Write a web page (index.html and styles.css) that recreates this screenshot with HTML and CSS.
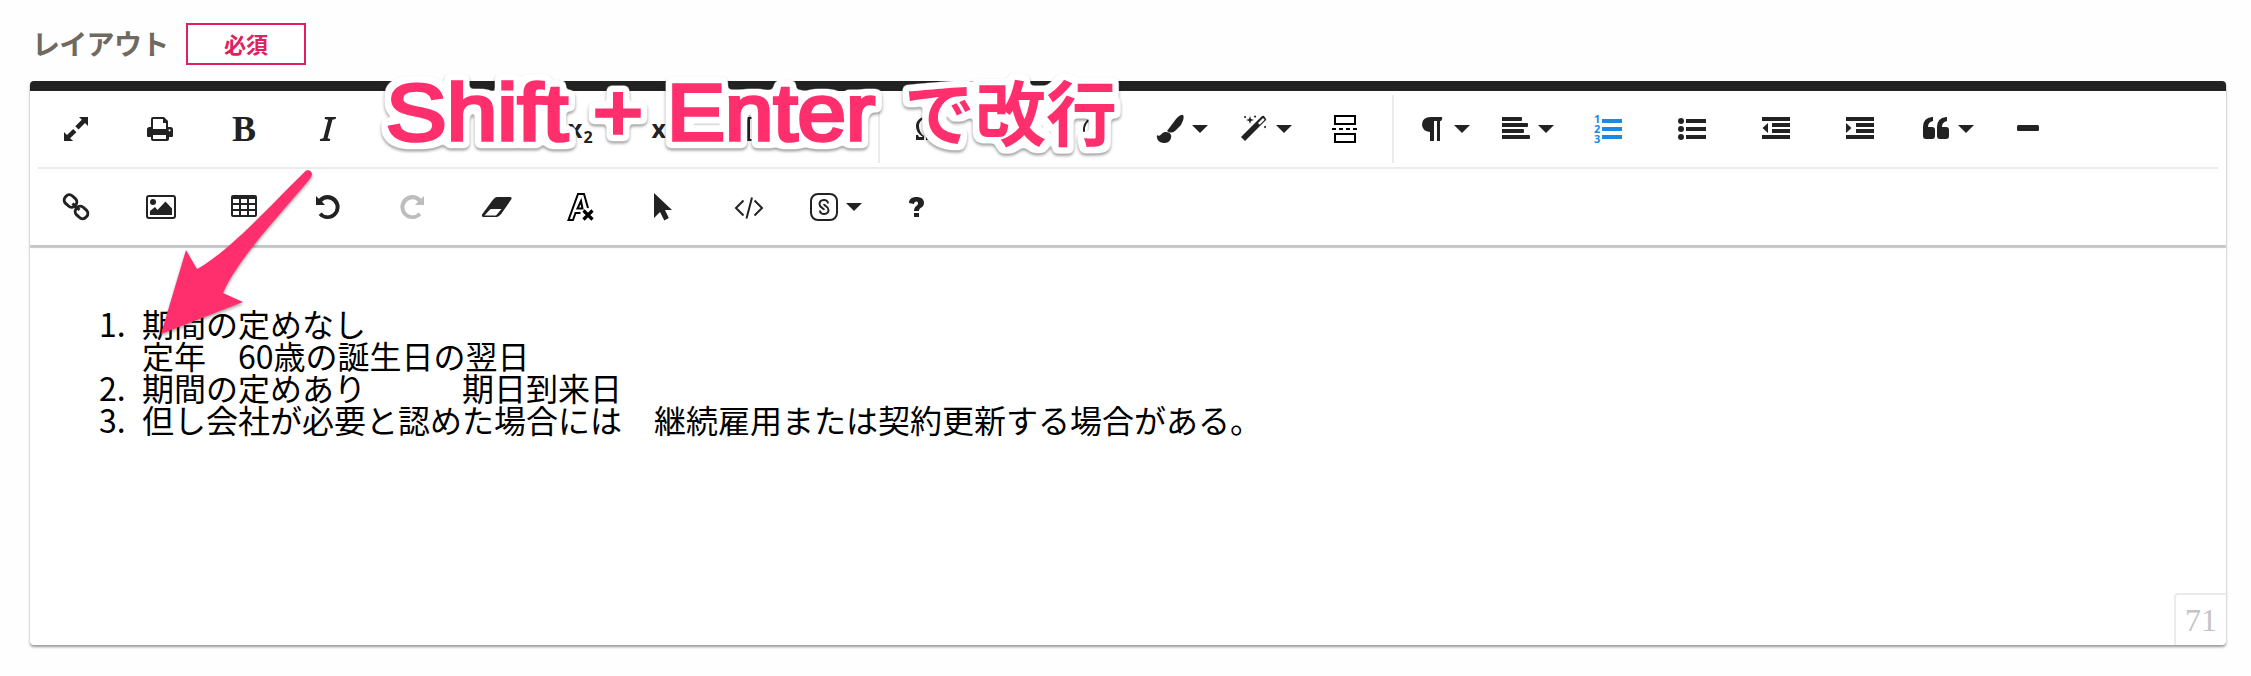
FILE: index.html
```
<!DOCTYPE html>
<html lang="ja">
<head>
<meta charset="utf-8">
<title>レイアウト</title>
<link rel="stylesheet" href="styles.css">
</head>
<body>
<main class="page">
  <div class="field-head"><label class="label">レイアウト</label><span class="required">必須</span></div>
  <section class="editor">
    <div class="toolbar">
      <div class="row">
        <svg class="btn" viewBox="34 91 84 76"><path d="M79 117h9v9l-3-3-6.500 6.500-3.200-3.200 6.500-6.500zM64 141v-9l3 3 6.200-6 3.200 3.200-6.300 6 3 2.800z"/></svg>
        <svg class="btn" viewBox="118 91 84 76"><path fill-rule="evenodd" d="M151 127v-8q0-2 2-2h11l4 4v6h2.500q2.500 0 2.500 2.500v6.500q0 1-1 1h-3v2q0 2-2 2h-14q-2 0-2-2v-2h-3q-1 0-1-1v-6.500q0-2.500 2.500-2.500zM153 119v10h13v-6h-3v-4zM153 135v4h13v-4zM169.500 129.300a1 1 0 1 0 .1 0z"/></svg>
        <svg class="btn" viewBox="202 91 84 76"><text class="serif-icon" x="232" y="141" textLength="24" lengthAdjust="spacingAndGlyphs">B</text></svg>
        <svg class="btn" viewBox="286 91 84 76"><path d="M325 117h11l-.4 2-3.200.8-4.800 18.400 2.600.8-.4 2h-10l.4-2 3.200-.8 4.800-18.400-3.500-.8z"/></svg>
        <svg class="btn" viewBox="370 91 84 76"><path d="M401 121h8v2l-2 1v9q0 5 5 5t5-5v-9l-2-1v-2h7v2l-2 1v9q0 8-8 8t-9-8v-9l-2-1z"/></svg>
        <svg class="btn" viewBox="454 91 84 76"><path d="M485 129h23v2h-23z"/></svg>
        <svg class="btn" viewBox="538 91 84 76"><text class="sans-icon" x="568" y="138" font-size="25">x</text><text class="sans-icon" x="583.500" y="143" font-size="16">2</text></svg>
        <svg class="btn" viewBox="622 91 84 76"><text class="sans-icon" x="651.500" y="138" font-size="25">x</text></svg>
        <svg class="btn" viewBox="706 91 84 76"><path d="M738 117h20v5h-2l-1-3h-5v20h3v2h-10v-2h3v-20h-5l-1 3h-2z"/></svg>
        <svg class="btn" viewBox="790 91 84 76"></svg>
        <span class="divider"></span>
        <svg class="btn" viewBox="884 91 84 76"><path d="M916 140v-5h2l1 2h4c-5-3-7-7-7-11 0-5 4-9 9-9s10 4 10 9c0 4-2 8-7 11h4l1-2h2v5h-9v-4c3-2 5-6 5-10s-3-7-6-7-6 3-6 7 2 8 5 10v4z"/></svg>
        <svg class="btn" viewBox="968 91 84 76"></svg>
        <svg class="btn" viewBox="1052 91 84 76"><path class="line" d="M1091 118q-8 5-7 14 2 8 9 8t9-8q0-9-9-14z"/></svg>
        <svg class="btn" viewBox="1136 91 84 76"><path d="M1167 131l9-12q5-5 7-4 2 2-2 10l-6 6q-4 3-8 0zM1157 135c3 3 5-4 9-3 4 0 6 3 5 6-1 4-4 5-7 5-4 0-8-3-7-8z"/><path d="M1192 125h16l-8 8z"/></svg>
        <svg class="btn" viewBox="1220 91 84 76"><path fill-rule="evenodd" d="M1241 137l20-20q2-2 3-1l2 3q1 1-1 2l-20 20zM1263 118l-5 5 1.700 1.700 5-5z"/><path d="M1250 116l1 3 3 1-3 1-1 3-1-3-3-1 3-1zM1245 116a1 1 0 1 0 .1 0zM1255 115.500a1 1 0 1 0 .1 0zM1265 126a1 1 0 1 0 .1 0z"/><path d="M1276 125h16l-8 8z"/></svg>
        <svg class="btn" viewBox="1304 91 84 76"><path class="line black" d="M1335 116h20v8h-20zM1335 134h20v8h-20z"/><path class="line black" stroke-dasharray="4 3" d="M1332 129h26"/></svg>
        <span class="divider"></span>
        <svg class="btn" viewBox="1398 91 84 76"><path d="M1431 117h11q1 2-1 4h-1v20h-3v-20h-3v20h-4v-9q-8-1-8-7.500 0-7.500 9-7.500z"/><path d="M1454 125h16l-8 8z"/></svg>
        <svg class="btn" viewBox="1482 91 84 76"><path d="M1502 117h19q1 0 1 1v2q0 1-1 1h-19zM1502 123h25q1 0 1 1v2q0 1-1 1h-25zM1502 129h21q1 0 1 1v2q0 1-1 1h-21zM1502 135h27q1 0 1 1v2q0 1-1 1h-27z"/><path d="M1538 125h16l-8 8z"/></svg>
        <svg class="btn active" viewBox="1566 91 84 76"><path d="M1602 119h20v4h-20zM1602 127h20v4h-20zM1602 135h20v4h-20z"/><g class="tiny"><text x="1594" y="123">1</text><text x="1594" y="133">2</text><text x="1594" y="143">3</text></g></svg>
        <svg class="btn" viewBox="1650 91 84 76"><path d="M1686 119h20v4h-20zM1686 127h20v4h-20zM1686 135h20v4h-20z"/><circle cx="1681" cy="121" r="3"/><circle cx="1681" cy="129" r="3"/><circle cx="1681" cy="137" r="3"/></svg>
        <svg class="btn" viewBox="1734 91 84 76"><path d="M1762 117h28v4h-28zM1772 123h18v4h-18zM1772 129h18v4h-18zM1762 135h28v4h-28zM1768 123v10l-5.500-5z"/></svg>
        <svg class="btn" viewBox="1818 91 84 76"><path d="M1846 117h28v4h-28zM1856 123h18v4h-18zM1856 129h18v4h-18zM1846 135h28v4h-28zM1846 123v10l5.500-5z"/></svg>
        <svg class="btn" viewBox="1902 91 84 76"><path id="q" d="M1923 127q0-9 9-10h1v4q-5 1-5 6h4q3 0 3 3v6q0 3-3 3h-6q-3 0-3-3z"/><use href="#q" x="14"/><path d="M1958 125h16l-8 8z"/></svg>
        <svg class="btn" viewBox="1986 91 84 76"><rect x="2017" y="125" width="22" height="6" rx="1.500"/></svg>
      </div>
      <div class="row second">
        <svg class="btn" viewBox="38 169 80 76"><g fill="none" stroke="#222" stroke-width="3"><rect x="64" y="196" width="13" height="10" rx="4.500" transform="rotate(43 70.500 201)"/><rect x="75" y="207.500" width="13" height="10" rx="4.500" transform="rotate(43 81.500 212.500)"/><path d="M72.500 203.500l7 6.500"/></g></svg>
        <svg class="btn" viewBox="118 169 84 76"><rect class="line" x="147" y="196" width="28" height="22" rx="2"/><circle cx="153" cy="202" r="3"/><path d="M150 215v-4l5-4 2.500 3 8-8.500 6.500 7v6.500z"/></svg>
        <svg class="btn" viewBox="202 169 84 76"><path fill-rule="evenodd" d="M233 195h22q2 0 2 2v18q0 2-2 2h-22q-2 0-2-2v-18q0-2 2-2zM233 199v4h6v-4zM241 199v4h6v-4zM249 199v4h6v-4zM233 205v4h6v-4zM241 205v4h6v-4zM249 205v4h6v-4zM233 211v4h6v-4zM241 211v4h6v-4zM249 211v4h6v-4z"/></svg>
        <svg class="btn" viewBox="286 169 84 76"><path id="undo" d="M316 196v9h9l-3-3.300a8 8 0 1 1-.5 10.800l-2.800 2.500a12 12 0 1 0 .2-16.300z"/></svg>
        <svg class="btn disabled" viewBox="370 169 84 76"><use href="#undo" transform="translate(740 0) scale(-1 1)"/></svg>
        <svg class="btn" viewBox="454 169 84 76"><path fill-rule="evenodd" d="M497 197h13q2 0 1.500 2l-10 14.500q-3 3.500-5 3.500h-13q-2 0-1.500-2.500l10-13.500q3-4 5-4zM490.500 209l-6 6.500h11.500l5.500-6.500z"/></svg>
        <svg class="btn" viewBox="538 169 84 76"><path class="line black" d="M588 208l-4-14h-6l-9.500 26h4.500l2.500-7h5M581 201l-3.500 7.500h5z"/><path d="M583.500 210.500l9 9M592.500 210.500l-9 9" stroke="#000" stroke-width="3.200"/></svg>
        <svg class="btn" viewBox="622 169 84 76"><path d="M654 193l18 17h-7l3.800 8-4.500 2.500-4.300-8.500-6 6z"/></svg>
        <svg class="btn" viewBox="706 169 84 76"><path class="line" d="M743.500 200.500l-7.500 7.500 7.500 7.500M754.500 200.500l7.500 7.500-7.500 7.500M752 197.500l-5.500 21"/></svg>
        <svg class="btn" viewBox="790 169 84 76"><rect class="line" x="811" y="194" width="26" height="26" rx="7"/><path class="line" d="M828 203.500C828 198.500 819.500 199 819.500 204c0 4 4.500 3.500 4.500 6M820 210.500C820 215.500 828.500 215 828.500 210c0-4-4.500-3.500-4.500-6"/><path d="M846 203h16l-8 8z"/></svg>
        <svg class="btn" viewBox="874 169 84 76"><path d="M909 203c0-4 3-6 7.500-6s7.500 2 7.500 6c0 5-5 4-5 8h-5c0-5 4-5 4-7.500 0-3-4-2.500-4 .5zM914 213h5v4h-5z"/></svg>
      </div>
    </div>
    <div class="content">
      <ol class="list">
        <li><span class="num">1.</span><div>期間の定めなし<br>定年　60歳の誕生日の翌日</div></li>
        <li><span class="num">2.</span><div>期間の定めあり　　　期日到来日</div></li>
        <li><span class="num">3.</span><div>但し会社が必要と認めた場合には　継続雇用または契約更新する場合がある。</div></li>
      </ol>
      <span class="counter">71</span>
    </div>
  </section>
  <svg class="callout" viewBox="0 0 2251 676">
    <defs>
      <filter id="outline" filterUnits="userSpaceOnUse" x="360" y="50" width="800" height="130" color-interpolation-filters="sRGB">
        <feMorphology in="SourceAlpha" operator="dilate" radius="5"/>
        <feGaussianBlur stdDeviation="2.500"/>
        <feComponentTransfer result="shape"><feFuncA type="linear" slope="6" intercept="-1.200"/></feComponentTransfer>
        <feFlood flood-color="#fff"/>
        <feComposite in2="shape" operator="in" result="white"/>
        <feMerge><feMergeNode in="white"/><feMergeNode in="SourceGraphic"/></feMerge>
      </filter>
    </defs>
    <g class="callout-shadow">
      <g class="callout-text" filter="url(#outline)">
        <text x="386" y="140" textLength="182" lengthAdjust="spacingAndGlyphs">Shift</text>
        <text x="593" y="140" textLength="50" lengthAdjust="spacingAndGlyphs">+</text>
        <text x="667" y="140" textLength="208" lengthAdjust="spacingAndGlyphs">Enter</text>
        <text class="jp" x="904" y="140" textLength="213">で改行</text>
      </g>
    </g>
    <path class="arrow" d="M306 170.500Q311 169 312 174Q312 176 309 180C280 215 239 257 223 293L243 302L161 334L186 250L197 269C227 253 270 206 306 170.500z"/>
  </svg>
</main>
</body>
</html>
```
FILE: styles.css
```
body { margin: 0; background: #fefefe; font-family: "Noto Sans CJK JP", sans-serif; }
.page { position: relative; width: 2251px; height: 676px; overflow: hidden; box-sizing: border-box; padding: 23px 25px 0 30px; }
.field-head { display: flex; align-items: center; height: 42px; margin-bottom: 16px; }
.label { width: 156px; box-sizing: border-box; padding: 0 0 3px 2px; color: #6f695f; font-size: 28px; font-weight: 700; line-height: 38px; letter-spacing: -.7px; white-space: nowrap; }
.required { box-sizing: border-box; width: 120px; height: 42px; border: 2px solid #e0205f; color: #e0205f; font-size: 22px; font-weight: 700; line-height: 36px; text-align: center; background: #fff; }
.editor { height: 564px; border-radius: 4px; background: #fff; box-shadow: 0 2px 3px rgba(0,0,0,.28), 0 2px 2px rgba(0,0,0,.15); }
.toolbar { position: relative; box-sizing: border-box; height: 164px; padding: 0 4px; border-top: 10px solid #222; border-radius: 4px 4px 0 0; background: #fff; box-shadow: 0 3px 1px #c6c6c6; }
.row { display: flex; height: 76px; }
.second { margin: 0 4px; border-top: 2px solid #ebebeb; }
.btn { width: 84px; height: 76px; flex: none; fill: #222; }
.second .btn:first-child { width: 80px; }
.divider { width: 2px; height: 68px; margin: 4px; background: #ebebeb; flex: none; }
.active { fill: #1e88e5; }
.disabled { fill: #bdbdbd; }
.line { fill: none; stroke: #222; stroke-width: 2; }
.black { stroke: #000; }
.serif-icon { font: 700 36px "Liberation Serif", serif; }
.sans-icon { font-family: "Open Sans", sans-serif; font-weight: 700; }
.tiny { font-family: "Noto Sans", sans-serif; font-size: 11px; font-weight: 700; }
.content { display: flex; justify-content: space-between; height: 400px; }
.list { margin: 0; padding: 62px 0 0 69px; list-style: none; color: #000; font-size: 32px; line-height: 32px; }
.list li { display: flex; white-space: nowrap; }
.num { width: 43px; }
.counter { align-self: flex-end; box-sizing: border-box; width: 52px; height: 52px; border: solid #ebebeb; border-width: 2px 0 0 2px; border-radius: 4px 0 0; color: #c4c4c4; font: 32px/50px "Liberation Serif", serif; text-align: center; }
.callout { position: absolute; inset: 0; width: 2251px; height: 676px; pointer-events: none; }
.callout-text { fill: #ff2f6e; stroke: #ff2f6e; stroke-width: 3.600px; font: 400 80px "Liberation Sans", sans-serif; }
.callout-text .jp { stroke: none; font-family: "Noto Sans CJK JP", sans-serif; font-weight: 700; font-size: 71px; }
.callout-shadow { filter: drop-shadow(0 2px 1.500px rgba(0,0,0,.4)); }
.arrow { fill: #ff2f6e; filter: drop-shadow(0 2px 1.500px rgba(0,0,0,.35)); }
```
